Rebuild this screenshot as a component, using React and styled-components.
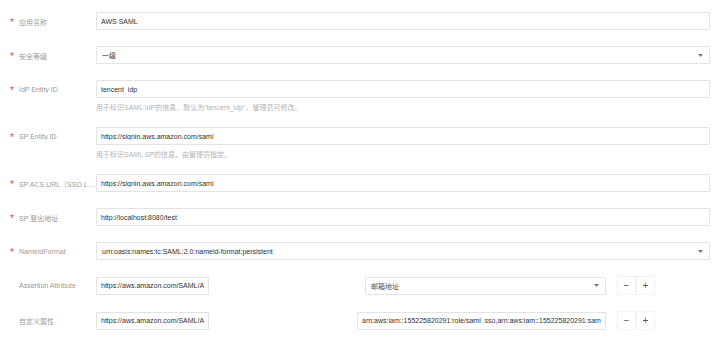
import React from "react";
import styled, { createGlobalStyle } from "styled-components";

const Global = createGlobalStyle`
  html, body { margin: 0; padding: 0; background: #fff; }
  body {
    font-family: "Liberation Sans", Arial, "Noto Sans CJK SC", sans-serif;
    font-size: 7px;
    color: #333;
  }
  * { box-sizing: border-box; }
`;

const Form = styled.div`
  padding: 12px 10px 0 10px;
  width: 720px;
`;

const Item = styled.div`
  display: grid;
  grid-template-columns: 86px 1fr;
  margin-bottom: 16px;
`;

const Label = styled.div`
  display: flex;
  height: 18px;
  padding-top: 1px;
  align-items: center;
  color: #9a9a9a;
  font-size: 7px;
  min-width: 0;
`;

const Star = styled.span`
  width: 9px;
  flex: none;
  color: #e5484d;
  font-size: 10px;
  line-height: 1;
  padding-top: 3px;
  visibility: ${(p) => (p.$show ? "visible" : "hidden")};
`;

const LabelText = styled.span`
  flex: 1;
  min-width: 0;
  white-space: nowrap;
  overflow: hidden;
  text-overflow: ellipsis;
`;

const Control = styled.div`
  min-width: 0;
`;

const Input = styled.input`
  display: block;
  width: ${(p) => p.$w || "100%"};
  height: 18px;
  line-height: 16px;
  border: 1px solid #e3e3e3;
  border-radius: 1px;
  padding: 0 4px;
  font-family: inherit;
  font-size: 7px;
  color: #333;
  background: #fff;
  outline: none;
  flex: none;
`;

const SelectBox = styled.div`
  display: flex;
  align-items: center;
  justify-content: space-between;
  width: ${(p) => p.$w || "100%"};
  height: 18px;
  border: 1px solid #e3e3e3;
  border-radius: 1px;
  padding: 0 6px 0 5px;
  color: ${(p) => (p.$muted ? "#555" : "#333")};
  font-size: 7px;
  white-space: nowrap;
  flex: none;
`;

const Help = styled.div`
  margin-top: 4px;
  margin-bottom: -3px;
  line-height: 12px;
  color: #b4b4b4;
  font-size: 7px;
  white-space: nowrap;
`;

const AttrRow = styled.div`
  display: flex;
  align-items: center;
`;

const Slot = styled.div`
  flex: 0 0 397px;
  display: flex;
  justify-content: flex-end;
`;

const Buttons = styled.div`
  display: flex;
  margin-left: 11px;
`;

const IconBtn = styled.div`
  width: 19px;
  height: 19px;
  display: flex;
  align-items: center;
  justify-content: center;
  border: 1px solid #f3f3f3;
  color: #555;
  font-size: 10px;
  line-height: 1;
`;

const Arrow = () => (
  <svg width="5" height="3" viewBox="0 0 5 3">
    <path d="M0 0 L5 0 L2.5 3 Z" fill="#777" />
  </svg>
);

const Select = ({ value, w, muted }) => (
  <SelectBox $w={w} $muted={muted}>
    <span>{value}</span>
    <Arrow />
  </SelectBox>
);

const Field = ({ label, required, help, children }) => (
  <Item>
    <Label>
      <Star $show={required}>*</Star>
      <LabelText title={label}>{label}</LabelText>
    </Label>
    <Control>
      {children}
      {help && <Help>{help}</Help>}
    </Control>
  </Item>
);

const MinusPlus = () => (
  <Buttons>
    <IconBtn>−</IconBtn>
    <IconBtn>+</IconBtn>
  </Buttons>
);

export default function App() {
  return (
    <>
      <Global />
      <Form>
        <Field label="应用名称" required>
          <Input readOnly value="AWS SAML" />
        </Field>
        <Field label="安全等级" required>
          <Select value="一级" />
        </Field>
        <Field
          label="IdP Entity ID"
          required
          help={"用于标识SAML IdP的信息，默认为\"tencent_idp\"，管理员可修改。"}
        >
          <Input readOnly value="tencent_idp" />
        </Field>
        <Field label="SP Entity ID" required help="用于标识SAML SP的信息，由管理员指定。">
          <Input readOnly value="https://signin.aws.amazon.com/saml" />
        </Field>
        <Field label="SP ACS URL（SSO Location）" required>
          <Input readOnly value="https://signin.aws.amazon.com/saml" />
        </Field>
        <Field label="SP 登出地址" required>
          <Input readOnly value="http://localhost:8080/test" />
        </Field>
        <Field label="NameIdFormat" required>
          <Select value="urn:oasis:names:tc:SAML:2.0:nameid-format:persistent" />
        </Field>
        <Field label="Assertion Attribute">
          <AttrRow>
            <Input readOnly $w="113px" value="https://aws.amazon.com/SAML/Attributes/RoleSessionName" />
            <Slot>
              <Select w="241px" value="邮箱地址" muted />
            </Slot>
            <MinusPlus />
          </AttrRow>
        </Field>
        <Field label="自定义属性">
          <AttrRow>
            <Input readOnly $w="113px" value="https://aws.amazon.com/SAML/Attributes/Role" />
            <Slot>
              <Input
                readOnly
                $w="249px"
                value="arn:aws:iam::155225820291:role/saml_sso,arn:aws:iam::155225820291:saml-provider/tencent_idp"
              />
            </Slot>
            <MinusPlus />
          </AttrRow>
        </Field>
      </Form>
    </>
  );
}
